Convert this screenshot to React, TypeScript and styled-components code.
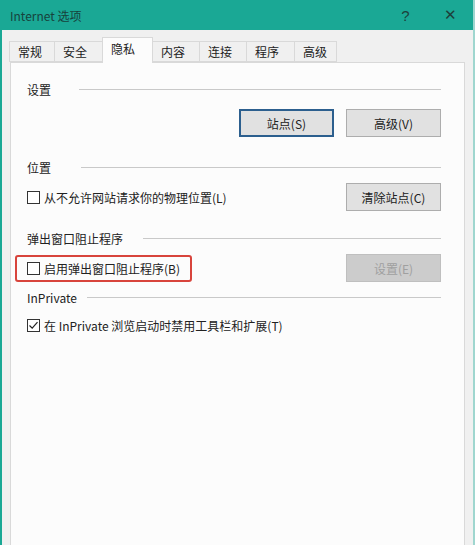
import styled, { createGlobalStyle } from "styled-components";

const GlobalStyle = createGlobalStyle`
    html, body {
        margin: 0;
        padding: 0;
        background: #f0f0f0;
    }
    body {
        font-family: "Noto Sans CJK SC", "Liberation Sans", sans-serif;
        font-size: 12px;
        color: #1e1e1e;
    }
`;

const Window = styled.div`
    width: 475px;
    height: 545px;
    box-sizing: border-box;
    border-left: 2px solid #1aa895;
    border-right: 2px solid #9fd6cf;
    background: #f0f0f0;
    display: flex;
    flex-direction: column;
    overflow: hidden;
`;

const TitleBar = styled.div`
    height: 30px;
    flex-shrink: 0;
    background: #1aa895;
    display: flex;
    align-items: center;
    padding: 0 0 0 8px;
    font-size: 12px;
    color: #17423c;
`;

const Title = styled.span`
    flex: 1;
`;

const TitleButton = styled.span<{ $w: number }>`
    width: ${(p) => p.$w}px;
    text-align: center;
    font-family: "Liberation Sans", sans-serif;
    font-size: 15px;
    color: #1d3f3b;
`;

const Body = styled.div`
    flex: 1;
    display: flex;
    flex-direction: column;
    padding: 7px 8px 0 8px;
`;

const TabStrip = styled.div`
    display: flex;
    align-items: flex-end;
    height: 25px;
    position: relative;
    z-index: 1;
`;

const Tab = styled.div<{ $active?: boolean; $w: number }>`
    width: ${(p) => p.$w}px;
    box-sizing: border-box;
    height: ${(p) => (p.$active ? 26 : 21)}px;
    margin-bottom: ${(p) => (p.$active ? -1 : 0)}px;
    padding-left: 8px;
    display: flex;
    align-items: center;
    background: ${(p) => (p.$active ? "#fcfcfc" : "#f0f0f0")};
    border: 1px solid #d9d9d9;
    border-bottom: ${(p) => (p.$active ? "none" : "1px solid #d9d9d9")};
    margin-left: -1px;
    font-size: 12px;
    color: #222;
    padding-bottom: ${(p) => (p.$active ? 4 : 0)}px;
`;

const Panel = styled.div`
    flex: 1;
    background: #fcfcfc;
    border: 1px solid #d9d9d9;
    border-bottom: none;
    padding: 18px 23px 0 16px;
    display: flex;
    flex-direction: column;
`;

const Header = styled.div<{ $mt: number; $gap: number }>`
    display: flex;
    align-items: center;
    gap: ${(p) => p.$gap}px;
    height: 16px;
    margin-top: ${(p) => p.$mt}px;
    color: #222;
    &::after {
        content: "";
        flex: 1;
        height: 1px;
        background: #c9c9c9;
    }
`;

const Row = styled.div<{ $mt: number }>`
    display: flex;
    align-items: center;
    justify-content: space-between;
    margin-top: ${(p) => p.$mt}px;
    min-height: 20px;
`;

const Buttons = styled.div`
    display: flex;
    gap: 12px;
    margin-left: auto;
`;

const Button = styled.div<{ $default?: boolean; $disabled?: boolean }>`
    width: 95px;
    height: 28px;
    box-sizing: border-box;
    display: flex;
    align-items: center;
    justify-content: center;
    background: ${(p) => (p.$disabled ? "#cccccc" : "#e1e1e1")};
    border: ${(p) =>
        p.$default ? "2px solid #2c5f8e" : p.$disabled ? "1px solid #bfbfbf" : "1px solid #adadad"};
    color: ${(p) => (p.$disabled ? "#a0a0a0" : "#222")};
    font-size: 12px;
`;

const CheckLabel = styled.label<{ $highlight?: boolean }>`
    position: relative;
    display: flex;
    align-items: center;
    gap: 4px;
    color: #222;
    ${(p) =>
        p.$highlight &&
        `
        &::before {
            content: "";
            position: absolute;
            left: -12px;
            right: -12px;
            top: -5px;
            bottom: -5px;
            border: 2.5px solid #d8443c;
            border-radius: 3px;
        }
    `}
`;

const Box = styled.span`
    width: 13px;
    height: 13px;
    box-sizing: border-box;
    border: 1px solid #333;
    background: #fff;
    display: flex;
    align-items: center;
    justify-content: center;
    flex-shrink: 0;
`;

function Checkbox({ checked }: { checked?: boolean }) {
    return (
        <Box>
            {checked && (
                <svg width="11" height="11" viewBox="0 0 11 11">
                    <path d="M1.5 5.5 L4.2 8.2 L9.5 2.2" fill="none" stroke="#222" strokeWidth="1.2" />
                </svg>
            )}
        </Box>
    );
}

const tabs: [string, number][] = [
    ["常规", 46],
    ["安全", 49],
    ["隐私", 51],
    ["内容", 48],
    ["连接", 48],
    ["程序", 49],
    ["高级", 43],
];

export default function App() {
    return (
        <>
            <GlobalStyle />
            <Window>
                <TitleBar>
                    <Title>Internet 选项</Title>
                    <TitleButton $w={45}>?</TitleButton>
                    <TitleButton $w={45}>✕</TitleButton>
                </TitleBar>
                <Body>
                    <TabStrip>
                        {tabs.map(([name, w]) => (
                            <Tab key={name} $w={w} $active={name === "隐私"}>
                                {name}
                            </Tab>
                        ))}
                    </TabStrip>
                    <Panel>
                        <Header $mt={0} $gap={28}>设置</Header>
                        <Row $mt={12}>
                            <Buttons>
                                <Button $default>站点(S)</Button>
                                <Button>高级(V)</Button>
                            </Buttons>
                        </Row>

                        <Header $mt={22} $gap={30}>位置</Header>
                        <Row $mt={8}>
                            <CheckLabel>
                                <Checkbox />
                                从不允许网站请求你的物理位置(L)
                            </CheckLabel>
                            <Button>清除站点(C)</Button>
                        </Row>

                        <Header $mt={19} $gap={20}>弹出窗口阻止程序</Header>
                        <Row $mt={8}>
                            <CheckLabel $highlight>
                                <Checkbox />
                                启用弹出窗口阻止程序(B)
                            </CheckLabel>
                            <Button $disabled>设置(E)</Button>
                        </Row>

                        <Header $mt={7} $gap={10}>InPrivate</Header>
                        <Row $mt={10}>
                            <CheckLabel>
                                <Checkbox checked />
                                在 InPrivate 浏览启动时禁用工具栏和扩展(T)
                            </CheckLabel>
                        </Row>
                    </Panel>
                </Body>
            </Window>
        </>
    );
}
